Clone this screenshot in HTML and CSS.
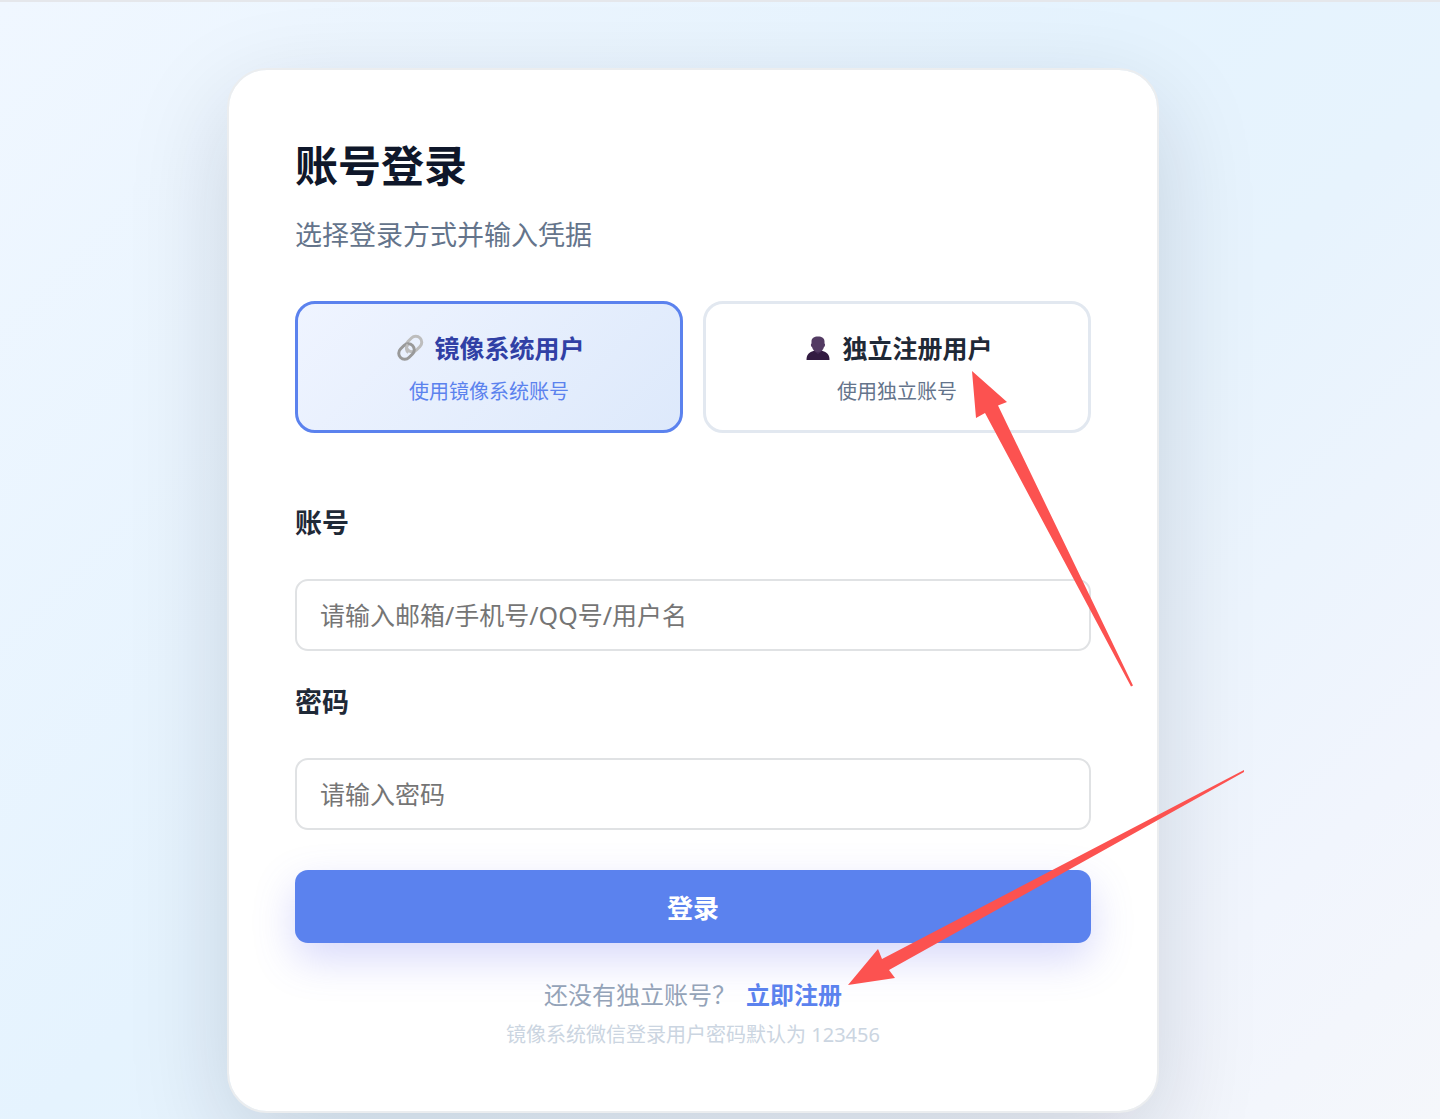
FILE: index.html
```html
<!DOCTYPE html>
<html lang="zh-CN">
<head>
    <meta charset="UTF-8">
    <meta name="viewport" content="width=device-width, initial-scale=1.0">
    <title>账号登录</title>
    <link rel="stylesheet" href="styles.css">
</head>
<body>
    <main class="page">
        <section class="card">
            <h1>账号登录</h1>
            <p class="subtitle">选择登录方式并输入凭据</p>

            <div class="login-types">
                <button type="button" class="login-type active">
                    <span class="type-title">
                        <svg class="type-icon" viewBox="0 0 34 30" aria-hidden="true">
                            <g fill="none" stroke-width="3">
                                <rect x="-8.500" y="-6" width="17" height="12" rx="6" stroke="#bdbdbd" transform="translate(21 11) rotate(-45)"/>
                                <rect x="-8.500" y="-6" width="17" height="12" rx="6" stroke="#999" transform="translate(13.500 18.500) rotate(-45)"/>
                                <path d="M15 11.500c-2.500 3-2 6 .5 8" stroke="#bdbdbd"/>
                            </g>
                        </svg>
                        镜像系统用户
                    </span>
                    <span class="type-desc">使用镜像系统账号</span>
                </button>
                <button type="button" class="login-type">
                    <span class="type-title">
                        <svg class="type-icon" viewBox="0 0 34 30" aria-hidden="true">
                            <path d="M5.500 27c0-5 2-7 5.500-8.500l4-1.500h4l4 1.500c3.500 1.500 5.500 3.500 5.500 8.500z" fill="#321b41"/>
                            <path d="M13.500 14h7v4.500l-3.500 2.500-3.500-2.500z" fill="#432a55"/>
                            <path d="M10.500 8.500c0-3.500 2.500-5 6.500-5s6.500 1.500 6.500 5v2c.8 0 .8 3-.5 3.500-.7 3-3 5-6 5s-5.300-2-6-5c-1.300-.5-1.300-3.500-.5-3.500z" fill="#533b63"/>
                        </svg>
                        独立注册用户
                    </span>
                    <span class="type-desc">使用独立账号</span>
                </button>
            </div>

            <form>
                <label for="account">账号</label>
                <input type="text" id="account" placeholder="请输入邮箱/手机号/QQ号/用户名">
                <label for="password">密码</label>
                <input type="password" id="password" placeholder="请输入密码">
                <button type="submit" class="submit">登录</button>
            </form>

            <p class="register">还没有独立账号？<a href="#">立即注册</a></p>
            <p class="hint">镜像系统微信登录用户密码默认为 123456</p>

            <svg class="arrow arrow-type" viewBox="0 0 162 317" aria-hidden="true">
                <path d="M1 0l35 31-9 3.500 135 280-2 1L14 42l-9 5z"/>
            </svg>
            <svg class="arrow arrow-register" viewBox="0 0 398 217" aria-hidden="true">
                <path d="M1 215l30-36 4 10L397 0v2L42 200l6 8z"/>
            </svg>
        </section>
    </main>
</body>
</html>
```
FILE: styles.css
```css
* {
    box-sizing: border-box;
}
body {
    margin: 0;
    font-family: "Noto Sans", "Noto Sans CJK SC", sans-serif;
    color: #1f2937;
}
h1, p {
    margin: 0;
}
button, input {
    font-family: inherit;
}
.page {
    display: flex;
    justify-content: center;
    align-items: flex-start;
    min-height: 100vh;
    padding: 66px 54px 0 0;
    border-top: 2px solid #e5e7eb;
    background: linear-gradient(135deg, #f0f7ff 0%, #e5f3fe 45%, #e7f3fd 60%, #f1f5fd 85%, #f5f7fb 100%);
    overflow: hidden;
}
.card {
    position: relative;
    width: 100%;
    max-width: 932px;
    padding: 67px 66px 56px;
    border: 2px solid #ebedef;
    border-radius: 40px;
    background: #fff;
    background-clip: padding-box;
    box-shadow: 0 33px 100px rgba(15, 23, 42, 0.15);
}
h1 {
    font-size: 43px;
    line-height: 58px;
    font-weight: 700;
    color: #0f172a;
}
.subtitle {
    margin-top: 20px;
    font-size: 27px;
    line-height: 40px;
    color: #64748b;
}
.login-types {
    display: grid;
    grid-template-columns: 1fr 1fr;
    gap: 20px;
    margin: 46px 0 70px;
}
.login-type {
    display: flex;
    flex-direction: column;
    align-items: center;
    gap: 8px;
    padding: 24px 22px 22px;
    border: 3px solid #e2e8f0;
    border-radius: 20px;
    background: #fff;
    color: #1f2937;
    cursor: pointer;
}
.type-title {
    display: flex;
    align-items: center;
    gap: 7px;
    font-size: 25px;
    line-height: 40px;
    font-weight: 700;
}
.type-icon {
    width: 34px;
    height: 30px;
}
.type-desc {
    font-size: 20px;
    line-height: 32px;
    color: #64748b;
}
.login-type.active {
    border-color: #5b82ee;
    background: linear-gradient(135deg, #eff4ff, #dde9fb);
    color: #3040a5;
}
.active .type-desc {
    color: #5b82ee;
}
form {
    display: flex;
    flex-direction: column;
}
label {
    margin-bottom: 36px;
    font-size: 27px;
    line-height: 40px;
    font-weight: 700;
}
form input {
    width: 100%;
    height: 72px;
    padding: 0 23px;
    border: 2px solid #e0e2e4;
    border-radius: 13px;
    background: #fff;
    font-size: 25px;
}
form input::placeholder {
    color: #757575;
}
input + label {
    margin-top: 31px;
}
.submit {
    height: 73px;
    margin-top: 40px;
    border: none;
    border-radius: 13px;
    background: #5b82ee;
    color: #fff;
    font-size: 26px;
    font-weight: 700;
    box-shadow: 0 16px 40px rgba(99, 102, 241, 0.25);
    cursor: pointer;
}
.register {
    margin-top: 32px;
    font-size: 24px;
    line-height: 40px;
    text-align: center;
    color: #94a3b8;
}
.register a {
    margin-left: 10px;
    color: #5b82ee;
    font-weight: 700;
    text-decoration: none;
}
.hint {
    font-size: 20px;
    line-height: 40px;
    text-align: center;
    color: #cbd5e1;
}
.arrow {
    position: absolute;
    fill: #fc5250;
    pointer-events: none;
}
.arrow-type {
    top: 301px;
    right: 24px;
    width: 162px;
    height: 317px;
}
.arrow-register {
    top: 700px;
    right: -88px;
    width: 398px;
    height: 217px;
}
```
